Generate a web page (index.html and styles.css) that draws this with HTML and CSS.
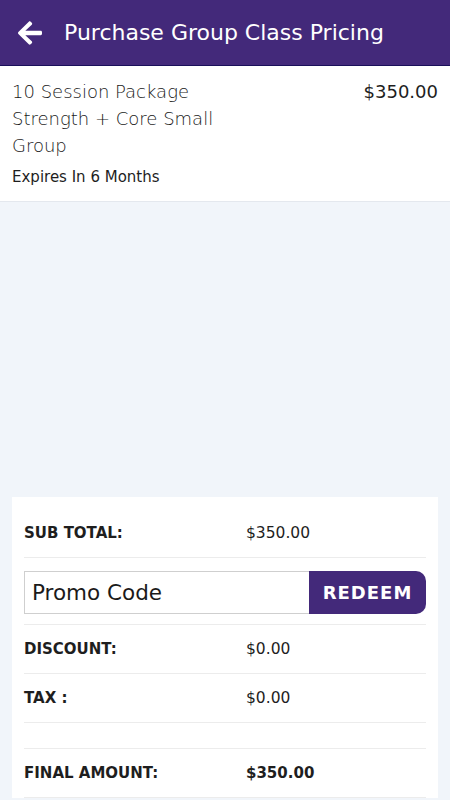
FILE: index.html
```html
<!DOCTYPE html>
<html>
<head>
<meta charset="utf-8">
<link rel="stylesheet" href="styles.css">
</head>
<body>
<div class="page">
  <header class="topbar">
    <svg class="back" viewBox="0 37 448 438" width="24" height="24" aria-hidden="true">
      <path fill="#fff" d="M257.5 445.1l-22.2 22.2c-9.4 9.4-24.6 9.4-33.9 0L7 273c-9.4-9.4-9.4-24.6 0-33.9L201.4 44.7c9.4-9.4 24.6-9.4 33.9 0l22.2 22.2c9.5 9.5 9.300 25-.4 34.3L136.6 216H424c13.3 0 24 10.7 24 24v32c0 13.3-10.7 24-24 24H136.6l120.5 114.8c9.8 9.3 10 24.8.4 34.3z"/>
    </svg>
    <h1 class="title">Purchase Group Class Pricing</h1>
  </header>

  <section class="item">
    <div class="item-info">
      <div class="item-name">10 Session Package<br>Strength + Core Small<br>Group</div>
      <div class="item-expiry">Expires In 6 Months</div>
    </div>
    <div class="item-price">$350.00</div>
  </section>

  <section class="summary">
    <div class="row">
      <span class="label">SUB TOTAL:</span>
      <span class="value">$350.00</span>
    </div>
    <div class="promo-row">
      <div class="promo-input">Promo Code</div>
      <button class="redeem">REDEEM</button>
    </div>
    <div class="row">
      <span class="label">DISCOUNT:</span>
      <span class="value">$0.00</span>
    </div>
    <div class="row">
      <span class="label">TAX :</span>
      <span class="value">$0.00</span>
    </div>
    <div class="row empty"></div>
    <div class="row">
      <span class="label">FINAL AMOUNT:</span>
      <span class="value strong">$350.00</span>
    </div>
  </section>
</div>
</body>
</html>
```

FILE: styles.css
```css
* { box-sizing: border-box; }

html, body {
  margin: 0;
  padding: 0;
}

body {
  background: #f1f5fa;
  font-family: "DejaVu Sans", "Liberation Sans", sans-serif;
  color: #1e1e1e;
  width: 450px;
  height: 800px;
  overflow: hidden;
}

.page {
  display: flex;
  flex-direction: column;
}

.topbar {
  height: 66px;
  background: #43297a;
  border-bottom: 1px solid #1a0f5a;
  display: flex;
  align-items: center;
  padding-left: 18px;
  gap: 22px;
}

.back {
  display: block;
  flex: none;
}

.title {
  margin: 0;
  color: #fff;
  font-size: 22px;
  font-weight: normal;
  line-height: 28px;
}

.item {
  background: #fff;
  border-bottom: 1px solid #e4e8ee;
  padding: 12px 12px 13px 12px;
  display: flex;
  justify-content: space-between;
  align-items: flex-start;
}

.item-name {
  font-size: 18px;
  line-height: 27px;
  color: #1a1a1a;
  font-weight: 300;
}

.item-expiry {
  margin-top: 7px;
  font-size: 15px;
  line-height: 22px;
  color: #1e1e1e;
}

.item-price {
  font-size: 18px;
  line-height: 27px;
  color: #1e1e1e;
}

.summary {
  margin: 295px 12px 0 12px;
  background: #fff;
  padding: 12px 12px 0 12px;
}

.row {
  height: 49px;
  border-bottom: 1px solid #ececec;
  display: grid;
  grid-template-columns: 222px 1fr;
  align-items: center;
}

.row.empty {
  height: 26px;
}

.label {
  font-size: 15px;
  font-weight: bold;
  color: #1e1e1e;
}

.value {
  font-size: 15.5px;
  color: #1e1e1e;
}

.value.strong {
  font-weight: bold;
  font-size: 15px;
}

.promo-row {
  display: flex;
  padding: 13px 0 10px 0;
  border-bottom: 1px solid #ececec;
}

.promo-input {
  width: 285px;
  height: 43px;
  border: 1px solid #cfcfcf;
  border-right: none;
  display: flex;
  align-items: center;
  padding-left: 7px;
  font-size: 21.5px;
  color: #1a1a1a;
}

.redeem {
  width: 117px;
  height: 43px;
  border: none;
  background: #43297a;
  color: #fff;
  border-radius: 0 10px 10px 0;
  font-family: "DejaVu Sans", "Liberation Sans", sans-serif;
  font-weight: bold;
  font-size: 18px;
  letter-spacing: 1px;
  padding: 0;
}
```
